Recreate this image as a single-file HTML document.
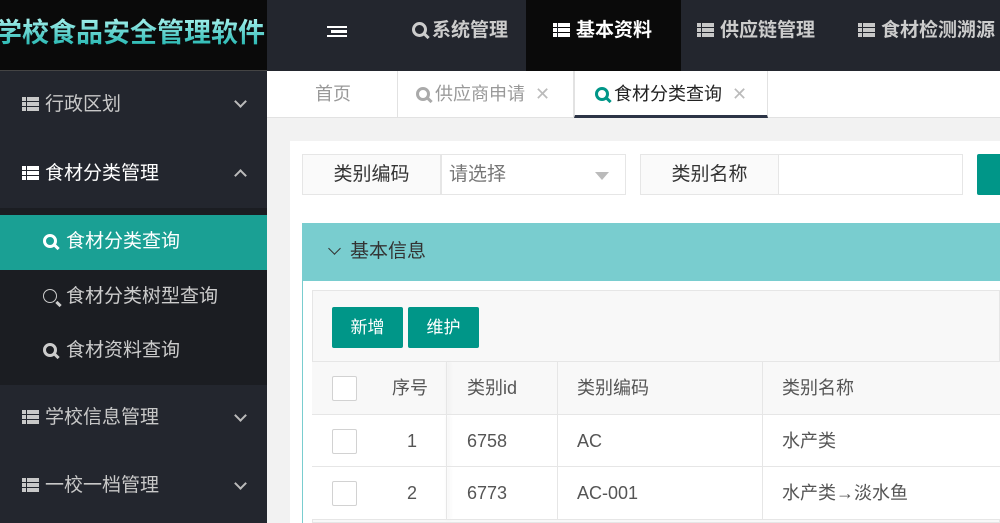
<!DOCTYPE html>
<html><head><meta charset="utf-8"><style>
*{margin:0;padding:0;box-sizing:border-box}
body{width:1000px;height:523px;overflow:hidden;position:relative;background:#f2f2f2;font-family:"Liberation Sans","Noto Sans CJK SC",sans-serif;font-size:18px;color:#333}
.abs{position:absolute}
.side{left:0;top:0;width:267px;height:523px;background:#23262e}
.logo{left:0;top:0;width:267px;height:71px;background:#0a0a0a;border-bottom:1px solid #444;font-size:27px;font-weight:bold;line-height:66px;white-space:nowrap;overflow:hidden;text-indent:-5px}
.logo span{background:linear-gradient(#a6f0ec,#1cb3ad);-webkit-background-clip:text;color:transparent}
.mi{left:0;width:267px;color:#c8c8c8;font-size:19px;padding-left:22px}
.mi .ic{display:inline-block;width:17px;height:14px;margin-right:6px;vertical-align:-1px;background:linear-gradient(#c8c8c8 0 4px,transparent 4px 5px,#c8c8c8 5px 9px,transparent 9px 10px,#c8c8c8 10px 14px)}
.mi .ic:after{content:"";display:block;margin-left:4px;width:1px;height:14px;background:#23262e}
.chev{position:absolute;right:22px;width:9px;height:9px;border-right:2px solid #bbb;border-bottom:2px solid #bbb}
.sub{left:0;top:208px;width:267px;height:177px;background:#1b1d22}
.si{left:0;width:267px;padding-left:43px;color:#ccc;font-size:19px}
.mag{display:inline-block;width:14px;height:14px;border:3px solid currentColor;border-radius:50%;position:relative;margin-right:9px;vertical-align:-1px}
.mag:after{content:"";position:absolute;width:3px;height:6px;background:currentColor;right:-4px;bottom:-5px;transform:rotate(-45deg)}
.top{left:267px;top:0;width:733px;height:71px;background:#23262e}
.tn{top:0;height:71px;line-height:62px;color:#ccc;font-weight:bold;font-size:19px;white-space:nowrap}
.tabs{left:267px;top:71px;width:733px;height:47px;background:#fff;border-bottom:1px solid #e2e2e2}
.tab{top:0;height:46px;line-height:46px;font-size:18px;color:#999;border-right:1px solid #e2e2e2}
.x{color:#bbb;margin-left:10px;font-size:18px}
.card{left:290px;top:141px;width:710px;height:382px;background:#fff}
.lb{background:#fafafa;border:1px solid #e6e6e6;height:41px;line-height:39px;text-align:center;color:#333;font-size:19px}
.ip{background:#fff;border:1px solid #e6e6e6;height:41px;line-height:39px;padding-left:7px;color:#777;font-size:19px}
.ph{left:302px;top:223px;width:698px;height:58px;background:#79cdcf;line-height:58px;padding-left:48px;font-size:19px;color:#333}
.pb{left:302px;top:281px;width:698px;height:242px;border-left:1px solid #79cdcf;background:#fff}
.inner{left:312px;top:290px;width:688px;height:233px;background:#f8f8f8;border:1px solid #e6e6e6}
.btn{top:307px;height:41px;width:71px;background:#009688;color:#fff;border-radius:2px;text-align:center;line-height:41px;font-size:17px}
.row{left:312px;width:688px;height:53px;border-top:1px solid #e6e6e6;font-size:18px;color:#555}
.cell{position:absolute;top:0;height:52px;line-height:52px}
.vl{position:absolute;top:0;width:1px;height:53px;background:#e6e6e6}
.cb{position:absolute;left:20px;top:14px;width:25px;height:25px;border:1px solid #d2d2d2;border-radius:2px;background:#fff}
</style></head><body>
<div class="abs side"></div>
<div class="abs logo"><span>学校食品安全管理软件</span></div>
<div class="abs mi" style="top:72px;height:68px;line-height:66px"><i class="ic"></i>行政区划<i class="chev" style="top:25px;transform:rotate(45deg)"></i></div>
<div class="abs mi" style="top:140px;height:68px;line-height:68px;color:#fff"><i class="ic" style="background:linear-gradient(#fff 0 4px,transparent 4px 5px,#fff 5px 9px,transparent 9px 10px,#fff 10px 14px)"></i>食材分类管理<i class="chev" style="top:31px;transform:rotate(-135deg)"></i></div>
<div class="abs sub"></div>
<div class="abs si" style="top:215px;height:55px;line-height:54px;background:#1aa094;color:#fff"><i class="mag"></i>食材分类查询</div>
<div class="abs si" style="top:270px;height:54px;line-height:54px"><i class="mag" style="border-width:1.5px"></i>食材分类树型查询</div>
<div class="abs si" style="top:324px;height:54px;line-height:54px"><i class="mag"></i>食材资料查询</div>
<div class="abs mi" style="top:385px;height:68px;line-height:66px"><i class="ic"></i>学校信息管理<i class="chev" style="top:26px;transform:rotate(45deg)"></i></div>
<div class="abs mi" style="top:453px;height:68px;line-height:66px"><i class="ic"></i>一校一档管理<i class="chev" style="top:26px;transform:rotate(45deg)"></i></div>

<div class="abs top"></div>
<div class="abs" style="left:327px;top:26px;width:20px;height:11px;border-top:2px solid #fff;border-bottom:2px solid #fff"><div style="margin:2px 0 0 4px;height:3px;background:#fff"></div></div>
<div class="abs tn" style="left:412px"><i class="mag" style="color:#ccc;width:15px;height:15px;margin-right:5px"></i>系统管理</div>
<div class="abs" style="left:526px;top:0;width:155px;height:71px;background:#0a0a0a"></div>
<div class="abs tn mi" style="left:531px;width:150px;color:#fff;padding-left:22px;font-weight:bold"><i class="ic" style="background:linear-gradient(#fff 0 4px,transparent 4px 5px,#fff 5px 9px,transparent 9px 10px,#fff 10px 14px)"></i>基本资料</div>
<div class="abs tn mi" style="left:675px;width:160px;font-weight:bold"><i class="ic"></i>供应链管理</div>
<div class="abs tn mi" style="left:836px;width:170px;font-weight:bold"><i class="ic"></i>食材检测溯源</div>

<div class="abs tabs"></div>
<div class="abs tab" style="left:267px;width:131px;padding-left:48px;top:71px">首页</div>
<div class="abs tab" style="left:398px;width:176px;padding-left:18px;top:71px"><i class="mag" style="color:#aaa;width:14px;height:14px;margin-right:5px"></i>供应商申请<span class="x">✕</span></div>
<div class="abs tab" style="left:574px;width:194px;padding-left:20px;top:71px;color:#222;border-left:1px solid #e2e2e2;border-bottom:3px solid #2c3446;height:47px"><i class="mag" style="color:#009688;width:14px;height:14px;margin-right:5px"></i>食材分类查询<span class="x">✕</span></div>

<div class="abs card"></div>
<div class="abs lb" style="left:302px;top:154px;width:139px">类别编码</div>
<div class="abs ip" style="left:441px;top:154px;width:185px">请选择<span style="position:absolute;right:16px;top:17px;border:7px solid transparent;border-top:8px solid #bbb"></span></div>
<div class="abs lb" style="left:640px;top:154px;width:139px">类别名称</div>
<div class="abs ip" style="left:778px;top:154px;width:185px"></div>
<div class="abs" style="left:977px;top:154px;width:30px;height:41px;background:#009688;border-radius:2px"></div>

<div class="abs ph"><span style="position:absolute;left:28px;top:21px;width:9px;height:9px;border-right:1.5px solid #333;border-bottom:1.5px solid #333;transform:rotate(45deg)"></span>基本信息</div>
<div class="abs pb"></div>
<div class="abs inner"></div>
<div class="abs btn" style="left:332px">新增</div>
<div class="abs btn" style="left:408px">维护</div>

<div class="abs row" style="top:361px;background:#f8f8f8">
<div class="cb"></div><div class="cell" style="left:80px">序号</div><div class="vl" style="left:134px;box-shadow:2px 0 4px #ddd"></div>
<div class="cell" style="left:155px">类别id</div><div class="vl" style="left:245px"></div>
<div class="cell" style="left:265px">类别编码</div><div class="vl" style="left:450px"></div>
<div class="cell" style="left:470px">类别名称</div></div>
<div class="abs row" style="top:414px;background:#fff">
<div class="cb"></div><div class="cell" style="left:95px">1</div><div class="vl" style="left:134px;box-shadow:2px 0 4px #ddd"></div>
<div class="cell" style="left:155px">6758</div><div class="vl" style="left:245px"></div>
<div class="cell" style="left:265px">AC</div><div class="vl" style="left:450px"></div>
<div class="cell" style="left:470px">水产类</div></div>
<div class="abs row" style="top:466px;background:#fff">
<div class="cb"></div><div class="cell" style="left:95px">2</div><div class="vl" style="left:134px;box-shadow:2px 0 4px #ddd"></div>
<div class="cell" style="left:155px">6773</div><div class="vl" style="left:245px"></div>
<div class="cell" style="left:265px">AC-001</div><div class="vl" style="left:450px"></div>
<div class="cell" style="left:470px">水产类→淡水鱼</div></div>
<div class="abs" style="left:312px;top:519px;width:688px;height:1px;background:#e6e6e6"></div>
</body></html>
